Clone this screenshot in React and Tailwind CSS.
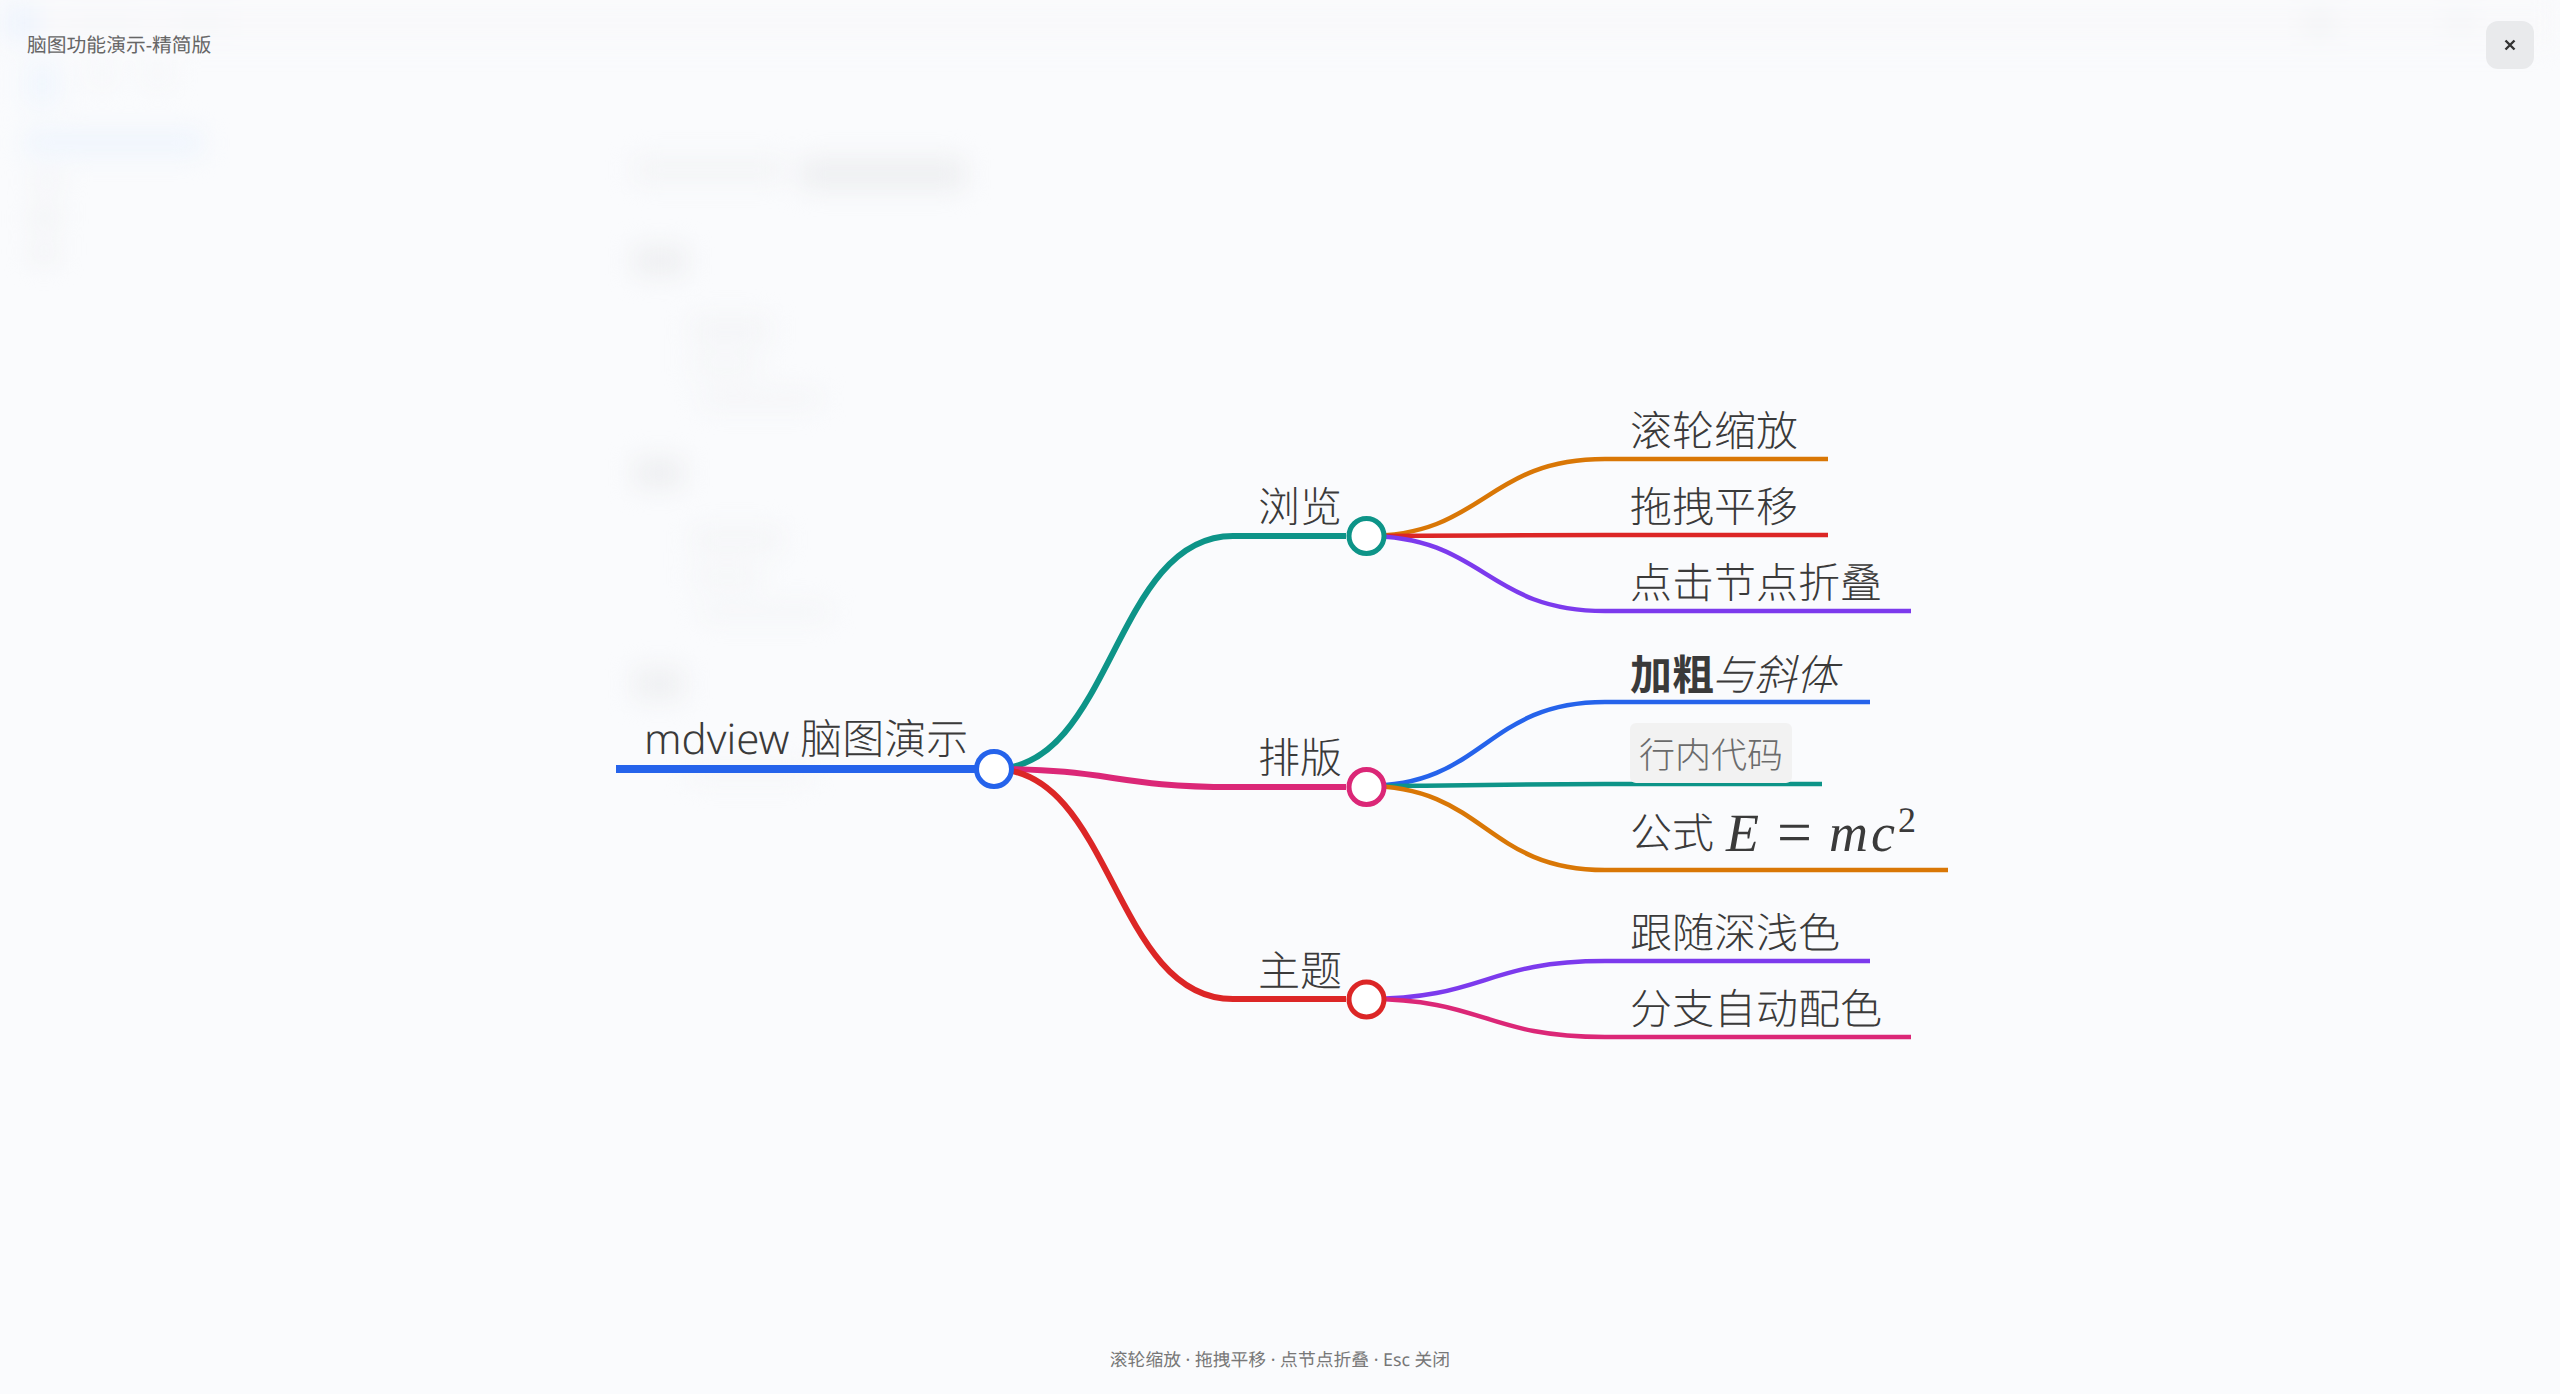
const FONT = "font-['Noto_Sans','Noto_Sans_CJK_SC',sans-serif]";

const links = [
  { d: "M616 769 L975 769", c: "#2563eb", w: 8 },
  { d: "M994 769 C1113 769 1113 536 1233 536 L1346 536", c: "#0d9488", w: 6 },
  { d: "M994 769 C1113 769 1113 787 1233 787 L1346 787", c: "#db2777", w: 6 },
  { d: "M994 769 C1113 769 1113 999 1233 999 L1346 999", c: "#dc2626", w: 6 },
  { d: "M1366 536 C1485 536 1485 459 1605 459 L1828 459", c: "#d97706", w: 4.5 },
  { d: "M1366 536 C1485 536 1485 535 1605 535 L1828 535", c: "#dc2626", w: 4.5 },
  { d: "M1366 536 C1485 536 1485 611 1605 611 L1911 611", c: "#7c3aed", w: 4.5 },
  { d: "M1366 786 C1485 786 1485 702 1605 702 L1870 702", c: "#2563eb", w: 4.5 },
  { d: "M1366 786 C1485 786 1485 784 1605 784 L1822 784", c: "#0d9488", w: 4.5 },
  { d: "M1366 786 C1485 786 1485 870 1605 870 L1948 870", c: "#d97706", w: 4.5 },
  { d: "M1366 999 C1485 999 1485 961 1605 961 L1870 961", c: "#7c3aed", w: 4.5 },
  { d: "M1366 999 C1485 999 1485 1037 1605 1037 L1911 1037", c: "#db2777", w: 4.5 },
];

const dots = [
  { x: 994, y: 769, c: "#2563eb" },
  { x: 1366.5, y: 536, c: "#0d9488" },
  { x: 1366.5, y: 787, c: "#db2777" },
  { x: 1366.5, y: 999.5, c: "#dc2626" },
];

const labelBase = "absolute h-[50px] flex items-center whitespace-nowrap leading-none text-[42px] font-light text-[#3a3a3a]";

function Backdrop() {
  return (
    <div aria-hidden="true" className="absolute inset-0 blur-[12px]">
      <div className="h-[46px] flex items-center justify-between pl-[4px] pr-[88px] bg-[#f9f9fb]">
        <div className="flex items-center gap-[30px]">
          <div className="w-[36px] h-[36px] rounded-lg bg-[#eef4fd]" />
          <div className="w-[70px] h-[12px] rounded bg-[#f5f6f8]" />
          <div className="w-[60px] h-[14px] rounded bg-[#f5f6f8]" />
        </div>
        <div className="flex items-center gap-[113px]">
          <div className="w-[32px] h-[32px] rounded-full bg-[#f3f4f6]" />
          <div className="w-[24px] h-[24px] rounded-full bg-[#f3f4f6]" />
        </div>
      </div>
      <div className="flex">
        <div className="w-[620px] shrink-0 pl-[24px] pt-[16px]">
          <div className="flex gap-[30px]">
            <div className="w-[36px] h-[44px] rounded bg-[#f1f6fd]" />
            <div className="w-[24px] h-[24px] rounded bg-[#f6f7f9]" />
            <div className="w-[28px] h-[24px] rounded bg-[#f6f7f9]" />
          </div>
          <div className="mt-[24px] w-[180px] h-[26px] rounded-lg bg-[#eff5fd]" />
          <div className="mt-[18px] ml-[6px] w-[34px] h-[16px] rounded bg-[#f3f4f6]" />
          <div className="mt-[18px] ml-[6px] w-[30px] h-[20px] rounded bg-[#f1f2f4]" />
          <div className="mt-[16px] ml-[6px] w-[28px] h-[18px] rounded bg-[#f1f2f4]" />
        </div>
        <div className="flex-1 pt-[112px] pl-[14px]">
          <div className="flex gap-[16px]">
            <div className="w-[150px] h-[24px] rounded bg-[#f3f4f6]" />
            <div className="w-[165px] h-[32px] rounded bg-[#eeeff1]" />
          </div>
          <div className="mt-[56px] w-[52px] h-[30px] rounded bg-[#eeeff1]" />
          <div className="mt-[40px] ml-[56px] w-[80px] h-[28px] rounded bg-[#f4f5f7]" />
          <div className="mt-[10px] ml-[56px] w-[70px] h-[22px] rounded bg-[#f5f6f8]" />
          <div className="mt-[14px] ml-[66px] w-[120px] h-[18px] rounded bg-[#f4f5f7]" />
          <div className="mt-[50px] w-[50px] h-[30px] rounded bg-[#eeeff1]" />
          <div className="mt-[40px] ml-[58px] w-[90px] h-[24px] rounded bg-[#f4f5f7]" />
          <div className="mt-[14px] ml-[58px] w-[70px] h-[22px] rounded bg-[#f5f6f8]" />
          <div className="mt-[16px] ml-[66px] w-[130px] h-[16px] rounded bg-[#f4f5f7]" />
          <div className="mt-[48px] w-[50px] h-[32px] rounded bg-[#eff0f2]" />
          <div className="mt-[64px] ml-[56px] w-[120px] h-[18px] rounded bg-[#f5f6f8]" />
        </div>
      </div>
    </div>
  );
}

function MindMap() {
  return (
    <div className="absolute inset-0">
      <svg className="absolute inset-0" width="2560" height="1394" viewBox="0 0 2560 1394" fill="none">
        {links.map((l, i) => (
          <path key={i} d={l.d} stroke={l.c} strokeWidth={l.w} />
        ))}
        {dots.map((d, i) => (
          <circle key={i} cx={d.x} cy={d.y} r="17.5" fill="#fff" stroke={d.c} strokeWidth="5" />
        ))}
      </svg>

      <div className={`${labelBase} left-[644px] top-[714px]`}>mdview 脑图演示</div>
      <div className={`${labelBase} left-[1258px] top-[482px]`}>浏览</div>
      <div className={`${labelBase} left-[1258px] top-[733px]`}>排版</div>
      <div className={`${labelBase} left-[1258px] top-[946px]`}>主题</div>

      <div className={`${labelBase} left-[1630px] top-[406px]`}>滚轮缩放</div>
      <div className={`${labelBase} left-[1630px] top-[482px]`}>拖拽平移</div>
      <div className={`${labelBase} left-[1630px] top-[558px]`}>点击节点折叠</div>

      <div className={`${labelBase} left-[1630px] top-[650px]`}>
        <span className="font-bold">加粗</span>
        <span className="-ml-[2px] italic">与斜体</span>
      </div>
      <div className="absolute left-[1630px] top-[723px] h-[60px] w-[162px] flex items-center justify-center rounded-[6px] bg-[#f2f2f2] pt-[4px] text-[36px] font-light leading-none text-[#6b6b6b] whitespace-nowrap">
        行内代码
      </div>
      <div className={`${labelBase} left-[1630px] top-[808px]`}>
        公式
        <span className="ml-[12px] font-['Liberation_Serif',serif] text-[54px] italic font-normal">E</span>
        <span className="ml-[18px] font-['Liberation_Serif',serif] text-[62px] font-normal">=</span>
        <span className="ml-[17px] font-['Liberation_Serif',serif] text-[54px] italic font-normal tracking-[3px]">mc</span>
        <span className="-mt-[26px] font-['Liberation_Serif',serif] text-[36px] font-normal">2</span>
      </div>

      <div className={`${labelBase} left-[1630px] top-[908px]`}>跟随深浅色</div>
      <div className={`${labelBase} left-[1630px] top-[984px]`}>分支自动配色</div>
    </div>
  );
}

export default function App() {
  return (
    <div className={`relative w-[2560px] h-[1394px] overflow-hidden bg-[#fafbfd] [text-rendering:geometricPrecision] ${FONT}`}>
      <Backdrop />
      <MindMap />
      <div className="absolute inset-0 flex flex-col justify-between pointer-events-none">
        <header className="flex items-center justify-between pl-[27px] pr-[26px] pt-[21px]">
          <div className="text-[19.8px] leading-none text-[#666]">脑图功能演示-精简版</div>
          <button className="w-[48px] h-[48px] flex items-center justify-center rounded-[12px] bg-[#e9eaec] text-[#333]">
            <svg width="12" height="12" viewBox="0 0 12 12" fill="none" stroke="currentColor" strokeWidth="2.4">
              <path d="M1.5 1.5 L10.5 10.5 M10.5 1.5 L1.5 10.5" />
            </svg>
          </button>
        </header>
        <footer className="pb-[23px] text-center text-[17.8px] leading-[22px] text-[#777]">
          滚轮缩放 · 拖拽平移 · 点节点折叠 · Esc 关闭
        </footer>
      </div>
    </div>
  );
}
